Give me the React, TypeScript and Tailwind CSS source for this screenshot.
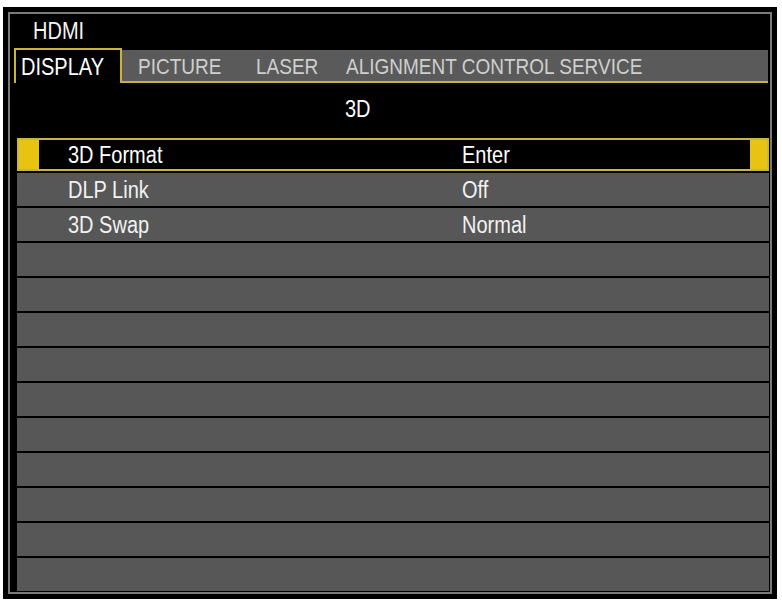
import React from "react";

const font = { fontFamily: '"Liberation Sans", Arial, sans-serif' };

function T({ children, className = "" }: { children: React.ReactNode; className?: string }) {
  return <span className={"inline-block scale-y-[1.15] origin-center " + className}>{children}</span>;
}

const rows: [string, string][] = [
  ["3D Format", "Enter"],
  ["DLP Link", "Off"],
  ["3D Swap", "Normal"],
  ["", ""],
  ["", ""],
  ["", ""],
  ["", ""],
  ["", ""],
  ["", ""],
  ["", ""],
  ["", ""],
  ["", ""],
  ["", ""],
];

export default function App() {
  return (
    <div className="w-[782px] h-[601px] bg-white pl-[3px] pt-[7px]" style={font}>
      <div className="w-[774px] h-[592px] bg-black p-[5px]">
        <div className="h-full border-2 border-[#7a7a7a] flex flex-col">
          {/* header */}
          <div className="h-[34px] flex items-center pl-[23px] text-[20px] text-[#f4f4f4] leading-none">
            <T>HDMI</T>
          </div>
          {/* tabs */}
          <div className="h-[35px] flex pl-[4px] pr-[2px] leading-none">
            <div className="w-[108px] h-[35px] border-2 border-b-0 border-[#c9b43a] bg-black flex items-center pl-[5px] text-[20px] text-white">
              <T>DISPLAY</T>
            </div>
            <div className="flex-1 mt-[2px] h-[33px] bg-[#5a5a5a] border-b-2 border-[#c9b43a] flex items-center text-[19px] text-[#cfcfcf] pl-[16px] pt-[1px]">
              <div className="w-[118px]"><T>PICTURE</T></div>
              <div className="w-[90px]"><T>LASER</T></div>
              <div><T>ALIGNMENT CONTROL SERVICE</T></div>
            </div>
          </div>
          {/* title */}
          <div className="h-[55px] flex items-center pl-[335px] pb-[4px] text-[20px] text-white leading-none">
            <T>3D</T>
          </div>
          {/* rows */}
          <div className="flex flex-col gap-[2px] pl-[7px] pr-[1px] bg-black">
            {rows.map(([label, value], i) =>
              i === 0 ? (
                <div key={i} className="h-[33px] border-2 border-[#c9b540] bg-black flex items-center text-[20px] text-white leading-none">
                  <div className="w-[20px] h-full bg-[#e7c412]" />
                  <div className="w-[423px] pl-[29px]"><T>{label}</T></div>
                  <div className="flex-1"><T>{value}</T></div>
                  <div className="w-[17px] h-full bg-[#e7c412]" />
                </div>
              ) : (
                <div key={i} className="h-[33px] bg-[#575757] flex items-center text-[20px] text-[#f2f2f2] leading-none">
                  <div className="w-[445px] pl-[51px]"><T>{label}</T></div>
                  <div className="flex-1"><T>{value}</T></div>
                </div>
              )
            )}
          </div>
        </div>
      </div>
    </div>
  );
}
